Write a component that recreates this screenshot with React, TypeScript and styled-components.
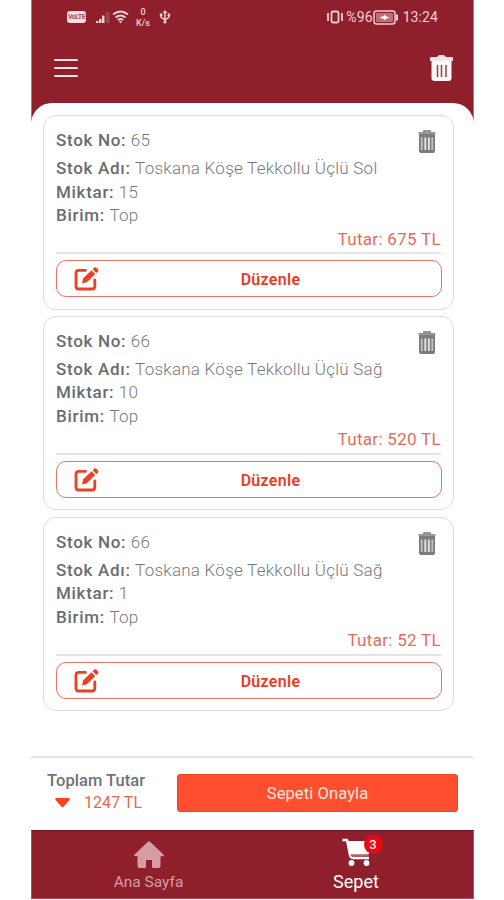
import React from "react";
import styled, { createGlobalStyle } from "styled-components";

const GlobalStyle = createGlobalStyle`
  * { box-sizing: border-box; }
  body { margin: 0; background: #fff; font-family: Roboto, "Noto Sans", sans-serif; }
  svg { display: block; flex: none; }
`;

const Page = styled.div`
  height: 900px;
  padding: 0 30px 0 31px;
  overflow: hidden;
`;
const Screen = styled.main`
  height: 899px;
  display: flex;
  flex-direction: column;
`;
const Top = styled.div`
  height: 122px;
  background: #901f2c;
  border: solid #d9626c;
  border-width: 0 1px;
  flex: none;
`;
const StatusBar = styled.div`
  height: 34px;
  padding: 0 35px 0 35px;
  display: flex;
  justify-content: space-between;
  align-items: center;
  color: #f4cfd2;
`;
const StatusGroup = styled.div`
  display: flex;
  align-items: center;
`;
const StatusText = styled.span<{ $ls: number; $gap: number }>`
  font-size: 14px;
  line-height: 18px;
  font-weight: 400;
  letter-spacing: ${(p) => p.$ls}px;
  margin-left: ${(p) => p.$gap}px;
`;
const Rate = styled.div`
  width: 18px;
  margin: 2px 7px 0 5px;
  text-align: center;
  font-size: 9px;
  line-height: 11px;
  font-weight: 500;
`;
const Volte = styled.span`
  width: 19px;
  height: 12px;
  margin-right: 10px;
  border-radius: 3px;
  background: #f8dcde;
  color: #a8505a;
  font-size: 7px;
  font-weight: 700;
  line-height: 12px;
  letter-spacing: -0.5px;
  text-align: center;
`;
const AppBar = styled.header`
  height: 68px;
  padding: 0 20px 0 22px;
  display: flex;
  justify-content: space-between;
  align-items: center;
`;
const MenuButton = styled.button`
  width: 24px;
  height: 18px;
  padding: 0;
  border: 0;
  background: none;
  display: flex;
  flex-direction: column;
  justify-content: space-between;
`;
const MenuLine = styled.span`
  width: 24px;
  height: 2.4px;
  border-radius: 1px;
  background: #f7e3e4;
`;
const Sheet = styled.section`
  height: 653.5px;
  margin-top: -19.5px;
  padding: 12.5px 20px 0 12px;
  background: #fff;
  border-radius: 21px 21px 0 0;
  display: flex;
  flex-direction: column;
  gap: 6.4px;
  flex: none;
`;
const Card = styled.article`
  height: 194.5px;
  padding: 13px 12px 0;
  border: 1.5px solid #dcdddf;
  border-radius: 13px;
  flex: none;
`;
const CardHead = styled.div`
  height: 25px;
  padding-right: 5px;
  display: flex;
  justify-content: space-between;
  align-items: flex-start;
  margin-bottom: 3px;

  > svg {
    margin-top: 1px;
  }
`;
const Row = styled.div`
  height: 23.5px;
  font-size: 17px;
  line-height: 23px;
  white-space: nowrap;
  color: #76797c;
  font-weight: 300;
`;
const Label = styled.span`
  color: #696d71;
  font-weight: 500;
  letter-spacing: 0.7px;
`;
const Value = styled.span`
  margin-left: 4.5px;
  letter-spacing: 0.25px;
`;
const Amount = styled.div`
  height: 26.5px;
  border-bottom: 2px solid #e4e4e5;
  text-align: right;
  font-size: 17px;
  line-height: 22px;
  font-weight: 400;
  letter-spacing: 0.3px;
  color: #e46d58;
`;
const EditButton = styled.button`
  width: 386px;
  height: 37px;
  margin-top: 6px;
  padding: 0 0 0 17px;
  display: grid;
  grid-template-columns: 26px 1fr 0;
  align-items: center;
  border: 1.5px solid #e87563;
  border-radius: 10px;
  background: #fff;
  font: 600 16px Roboto, sans-serif;
  color: #ea3c22;
`;
const EditText = styled.span`
  padding-top: 2px;
  letter-spacing: 0.3px;
`;
const Checkout = styled.section`
  height: 74px;
  border-top: 2px solid #e5e5e6;
  margin-right: 1px;
  padding: 0 15px 0 16px;
  display: flex;
  justify-content: space-between;
  flex: none;
`;
const Total = styled.div`
  padding-top: 12px;
  color: #6f7377;
  font-size: 16.5px;
  line-height: 22px;
  font-weight: 500;
  letter-spacing: 0.05px;
`;
const TotalValue = styled.div`
  display: flex;
  align-items: center;
  gap: 14px;
  padding-left: 8px;
  color: #e8694f;
  font-weight: 400;
  font-size: 16px;
`;
const Confirm = styled.button`
  width: 281px;
  height: 38px;
  margin-top: 16px;
  padding: 0;
  border: 1px solid #f4421f;
  border-radius: 3px;
  background: #ff4f30;
  color: #ffe6de;
  font: 400 16.5px Roboto, sans-serif;
  letter-spacing: 0.1px;
`;
const Nav = styled.nav`
  height: 69px;
  display: grid;
  grid-template-columns: 233px 182px;
  background: #901f2c;
  border: 1px solid #c74b57;
  border-top: 1px solid #74121d;
  flex: none;
`;
const NavItem = styled.a<{ $active?: boolean }>`
  display: flex;
  flex-direction: column;
  align-items: center;
  padding-top: ${(p) => (p.$active ? 7 : 10)}px;
  gap: ${(p) => (p.$active ? 4 : 2)}px;
  color: ${(p) => (p.$active ? "#fff" : "#d79ca3")};
  font-size: ${(p) => (p.$active ? 18 : 15.5)}px;
  line-height: 23px;
`;
const CartIcon = styled.span`
  position: relative;
`;
const Badge = styled.span`
  position: absolute;
  left: 22px;
  top: -3px;
  width: 19px;
  height: 19px;
  border-radius: 50%;
  background: #e90814;
  color: #ffe4e4;
  text-align: center;
  font-size: 13px;
  font-weight: 500;
  line-height: 20px;
`;

const Signal = () => (
  <svg width="15" height="13" viewBox="0 0 15 13" fill="currentColor">
    <path d="M0 10h2.500v2H0zM3 8h2.500v4H3zM6 4.500h2.500v7.500H6z" />
    <path d="M10 1h3.500v11H10z" opacity=".2" />
  </svg>
);
const Wifi = () => (
  <svg width="18" height="14" viewBox="-1 0 18 14" fill="none" stroke="currentColor" strokeWidth="1.900">
    <path d="M1 4.500q7.500-6 15 0M3.500 7.500q5-4 10 0M5.800 10q2.700-2 5.400 0" />
    <path d="M6.800 11h3.400l-1.700 2.500z" fill="currentColor" stroke="none" />
  </svg>
);
const Usb = () => (
  <svg width="12" height="14" viewBox="0 0 12 14" fill="none" stroke="currentColor" strokeWidth="1.500">
    <path d="M6 2v10M2 5v2l4 3 4-3V5" />
    <path d="M6 0l2.500 3h-5zM.8 3.500h2.600v2.600H.8zM8.600 3.500h2.600v2.600H8.600z" fill="currentColor" stroke="none" />
    <circle cx="6" cy="12" r="1.600" fill="currentColor" stroke="none" />
  </svg>
);
const Vibrate = () => (
  <svg width="16" height="14" viewBox="0 0 16 14" fill="none" stroke="currentColor">
    <rect x="4.500" y="1.500" width="7" height="11" rx="1.800" strokeWidth="1.800" />
    <path d="M1 3v8M15 3v8" strokeWidth="1.800" />
  </svg>
);
const Battery = () => (
  <svg width="25" height="15" viewBox="0 0 25 15" fill="none" stroke="currentColor" strokeWidth="1.500">
    <rect x="1" y="1" width="21" height="13" rx="2.500" />
    <rect x="3" y="3" width="17" height="9" rx="1" fill="currentColor" stroke="none" opacity=".45" />
    <path d="M24 4.500v6" strokeWidth="2" />
    <path d="M6.500 7.500l4-1.500 1-1.500 1 1.500 4 1.500-4 1.500-1 1.500-1-1.500z" fill="#fff" stroke="none" />
  </svg>
);
const HeaderTrash = () => (
  <svg width="23" height="27" viewBox="0 0 23 27">
    <path d="M0 3q0-1 1-1h6l2-2h5l2 2h6q1 0 1 1v3H0z" fill="#f8dfe0" />
    <path d="M1.500 5.500h20v17.500q0 3-3 3h-14q-3 0-3-3z" fill="#fff8f8" />
    <path d="M7.500 10v12M11.500 10v12M16 10v12" stroke="#92404b" strokeWidth="1.500" />
  </svg>
);
const CardTrash = () => (
  <svg width="18" height="24" viewBox="0 0 18 24">
    <path d="M.5 3h17" stroke="#999" strokeWidth="2" />
    <path d="M6 2.500V1h6v1.500" fill="none" stroke="#777" strokeWidth="1.500" />
    <path d="M1 4h16v17q0 2-2 2H3q-2 0-2-2z" fill="#7c7c7c" />
    <path d="M3.700 7.500v12.500M14.300 7.500v12.500" stroke="#c2c2c2" strokeWidth="1.800" />
    <path d="M7.300 7.500v12.500M10.900 7.500v12.500" stroke="#dedede" strokeWidth="2" />
  </svg>
);
const Pencil = () => (
  <svg width="26" height="25" viewBox="0 0 26 25">
    <path d="M11.500 4.300H4.700Q2 4.300 2 7v13.200Q2 23 4.700 23H18q2.800 0 2.800-2.800V14" fill="none" stroke="#ed4022" strokeWidth="2.800" strokeLinecap="round" />
    <path d="M8 17.500l1.200-5.200 8.300-8 3.700 3.800-8.300 8.200z" fill="#ed4022" />
    <path d="M18.600 3.300l1.600-1.700q1-.8 2 0l1.800 1.900q.8 1 0 1.900L22.300 7z" fill="#ed4022" />
  </svg>
);
const Home = () => (
  <svg width="30" height="28" viewBox="0 0 30 28" fill="currentColor">
    <path d="M14 .8q1-1 2 0l13.500 12.700q1 1.500-.7 1.800H26.500V25q0 2-2 2H19q-1 0-1-1v-7h-6v7q0 1-1 1H5.500q-2 0-2-2v-9.700H1.200q-1.700-.3-.7-1.800z" />
  </svg>
);
const Cart = () => (
  <svg width="29" height="28" viewBox="0 0 29 28" fill="none" stroke="#fff">
    <path d="M.5 2H5l3 15q.3 3 3 3h16" strokeWidth="2.400" strokeLinejoin="round" />
    <path d="M5.500 3h22v11.500q0 2-2 2H8.500z" fill="#fff" stroke="none" />
    <path d="M8.500 17.500H27" stroke="#b7636c" strokeWidth="1.500" />
    <circle cx="9.500" cy="25" r="2.900" fill="#fff" stroke="none" />
    <circle cx="24.500" cy="25" r="2.900" fill="#fff" stroke="none" />
  </svg>
);
const Caret = () => (
  <svg width="15" height="10" viewBox="0 0 15 10">
    <path d="M1 0h13q1.500 1 .2 2.200L8.500 8.800q-1 1-2 0L.8 2.200Q-.5 1 1 0z" fill="#f5431f" />
  </svg>
);

const items = [
  { no: "65", name: "Toskana Köşe Tekkollu Üçlü Sol", qty: "15", total: "675 TL" },
  { no: "66", name: "Toskana Köşe Tekkollu Üçlü Sağ", qty: "10", total: "520 TL" },
  { no: "66", name: "Toskana Köşe Tekkollu Üçlü Sağ", qty: "1", total: "52 TL" },
];

const Field = ({ label, value }: { label: string; value: string }) => (
  <Row>
    <Label>{label}:</Label>
    <Value>{value}</Value>
  </Row>
);

export default function App() {
  return (
    <Page>
      <GlobalStyle />
      <Screen>
        <Top>
          <StatusBar>
            <StatusGroup>
              <Volte>VoLTE</Volte>
              <Signal />
              <Wifi />
              <Rate>
                <div>0</div>
                <div>K/s</div>
              </Rate>
              <Usb />
            </StatusGroup>
            <StatusGroup>
              <Vibrate />
              <StatusText $ls={0.1} $gap={3}>%96</StatusText>
              <Battery />
              <StatusText $ls={0.1} $gap={5}>13:24</StatusText>
            </StatusGroup>
          </StatusBar>
          <AppBar>
            <MenuButton aria-label="Menü">
              <MenuLine />
              <MenuLine />
              <MenuLine />
            </MenuButton>
            <HeaderTrash />
          </AppBar>
        </Top>
        <Sheet>
          {items.map((item, i) => (
            <Card key={i}>
              <CardHead>
                <Field label="Stok No" value={item.no} />
                <CardTrash />
              </CardHead>
              <Field label="Stok Adı" value={item.name} />
              <Field label="Miktar" value={item.qty} />
              <Field label="Birim" value="Top" />
              <Amount>Tutar: {item.total}</Amount>
              <EditButton>
                <Pencil />
                <EditText>Düzenle</EditText>
              </EditButton>
            </Card>
          ))}
        </Sheet>
        <Checkout>
          <Total>
            Toplam Tutar
            <TotalValue>
              <Caret />
              1247 TL
            </TotalValue>
          </Total>
          <Confirm>Sepeti Onayla</Confirm>
        </Checkout>
        <Nav>
          <NavItem>
            <Home />
            Ana Sayfa
          </NavItem>
          <NavItem $active>
            <CartIcon>
              <Cart />
              <Badge>3</Badge>
            </CartIcon>
            Sepet
          </NavItem>
        </Nav>
      </Screen>
    </Page>
  );
}
